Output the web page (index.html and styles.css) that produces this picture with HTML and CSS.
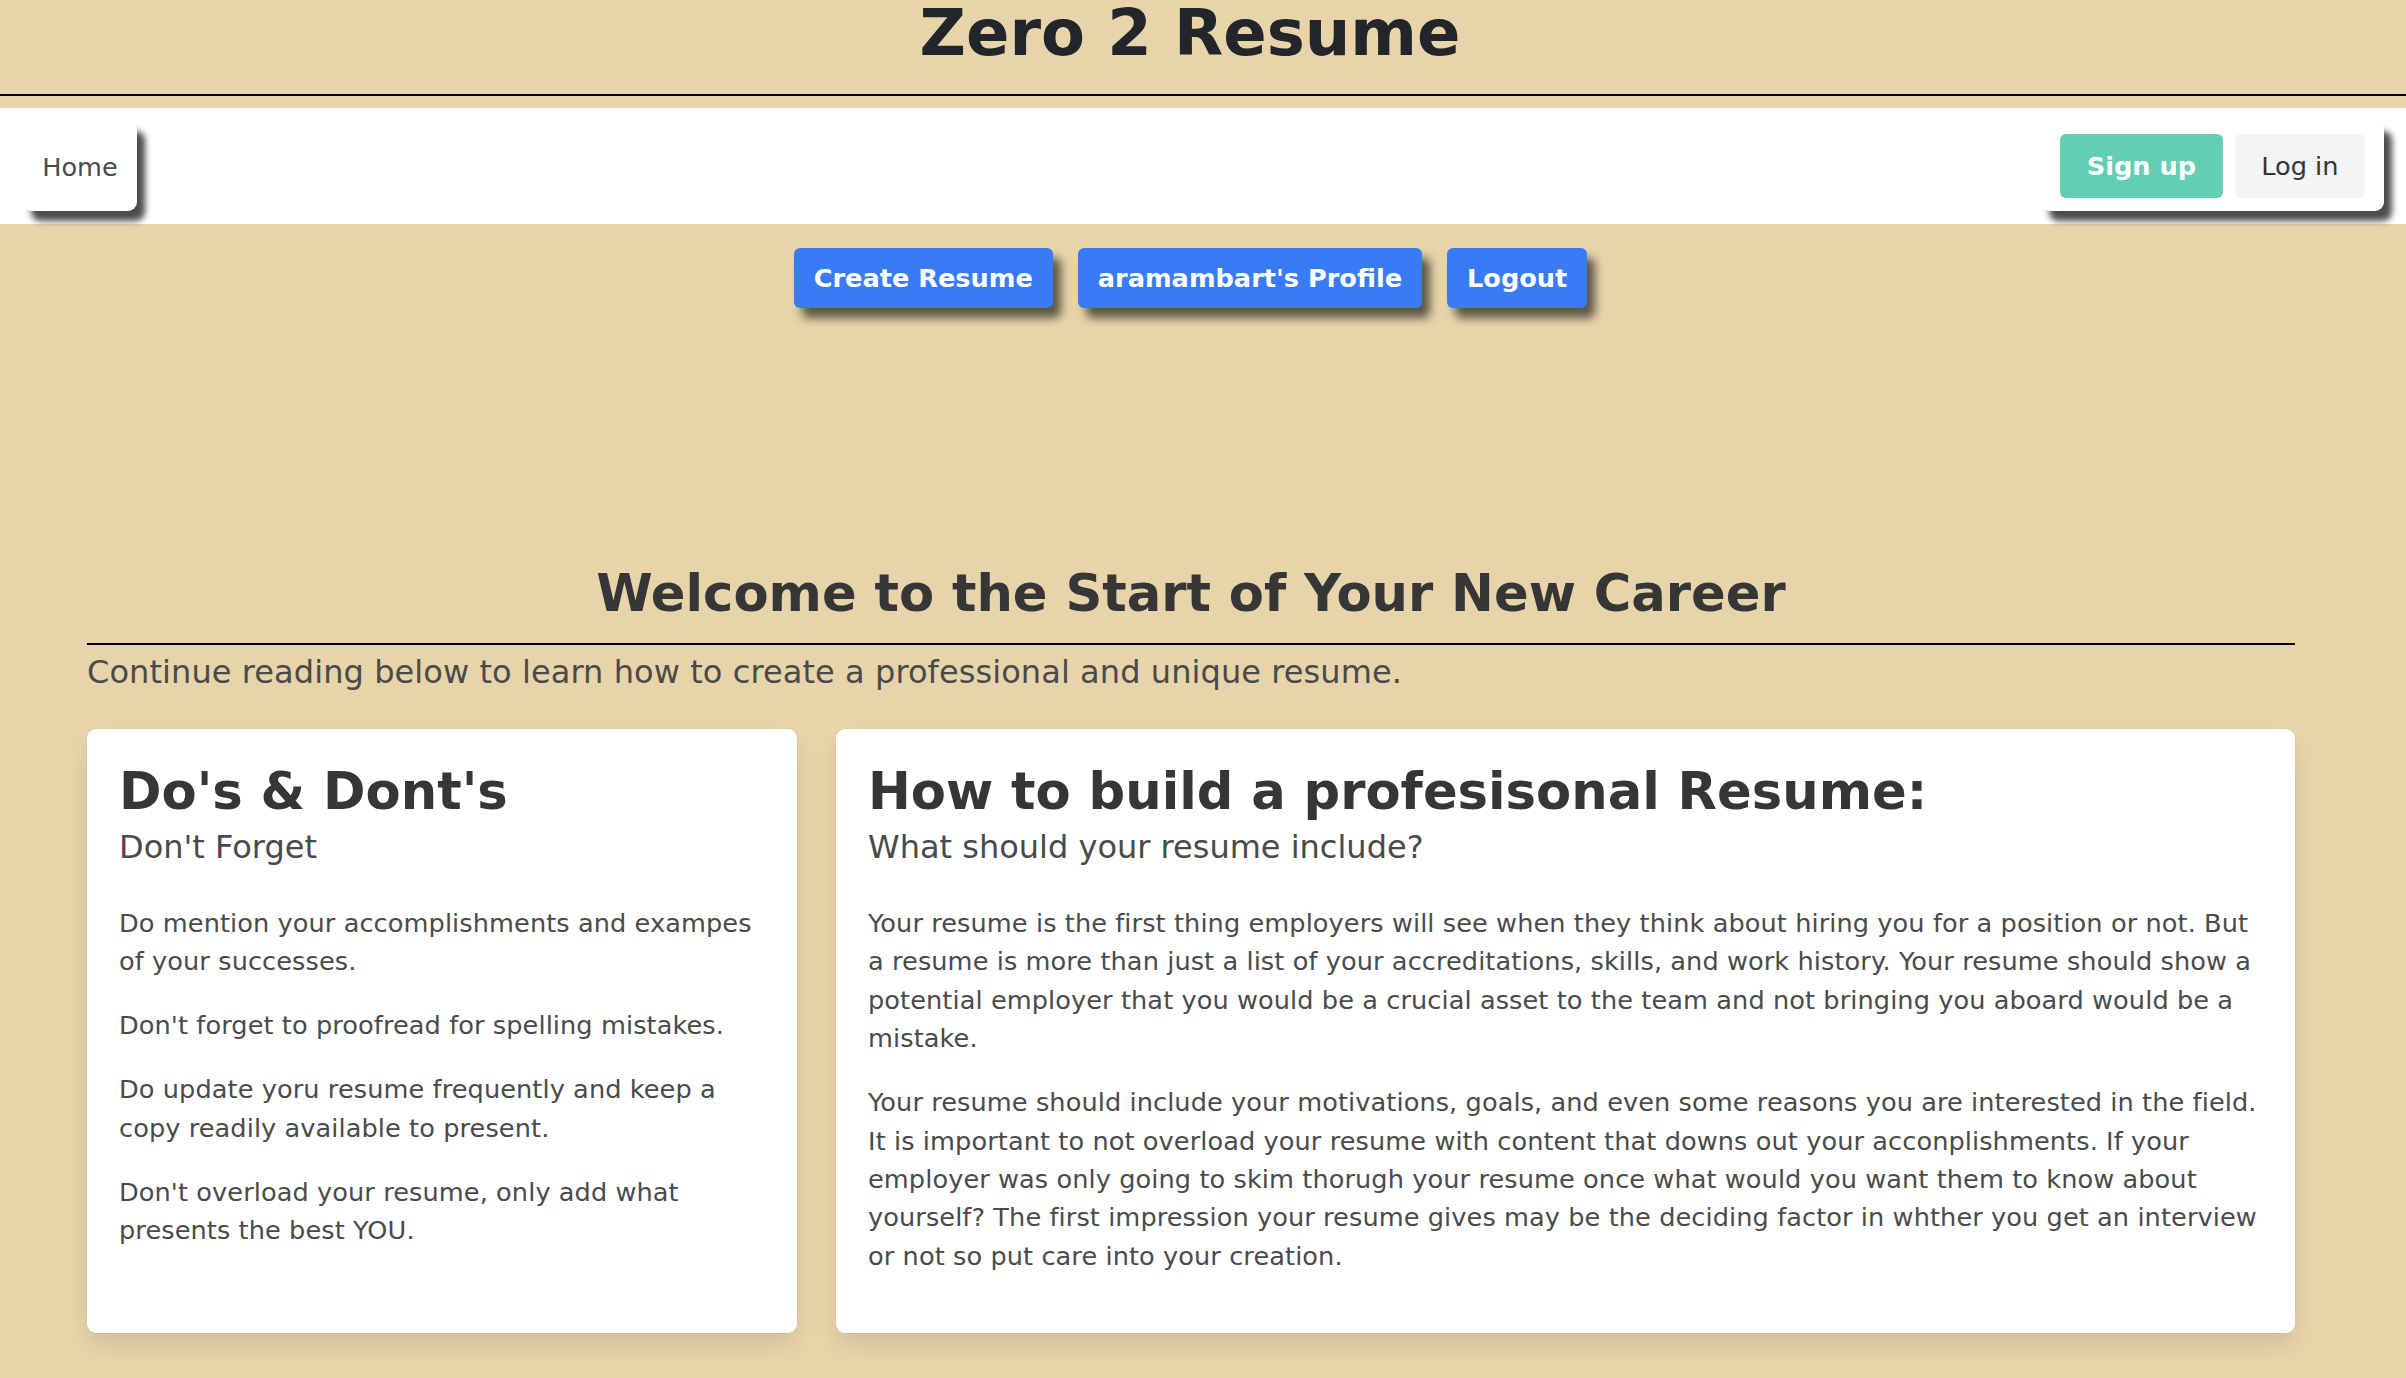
FILE: index.html
```html
<!DOCTYPE html>
<html lang="en">
<head>
<meta charset="utf-8">
<title>Zero 2 Resume</title>
<link rel="stylesheet" href="styles.css">
</head>
<body>
<header class="site-header">
  <h1 class="site-title">Zero 2 Resume</h1>
</header>
<nav class="navbar">
  <div class="nav-start">
    <a class="nav-home" href="#">Home</a>
  </div>
  <div class="nav-end">
    <div class="nav-auth">
      <a class="btn btn-signup" href="#">Sign up</a>
      <a class="btn btn-login" href="#">Log in</a>
    </div>
  </div>
</nav>
<div class="actions">
  <a class="action-btn" href="#">Create Resume</a>
  <a class="action-btn" href="#">aramambart's Profile</a>
  <a class="action-btn" href="#">Logout</a>
</div>
<main class="main">
  <h2 class="welcome-title">Welcome to the Start of Your New Career</h2>
  <hr class="rule">
  <p class="lead">Continue reading below to learn how to create a professional and unique resume.</p>
  <div class="cards">
    <section class="card">
      <h3 class="card-title">Do's &amp; Dont's</h3>
      <p class="card-subtitle">Don't Forget</p>
      <div class="card-body">
        <p>Do mention your accomplishments and exampes of your successes.</p>
        <p>Don't forget to proofread for spelling mistakes.</p>
        <p>Do update yoru resume frequently and keep a copy readily available to present.</p>
        <p>Don't overload your resume, only add what presents the best YOU.</p>
      </div>
    </section>
    <section class="card">
      <h3 class="card-title">How to build a profesisonal Resume:</h3>
      <p class="card-subtitle">What should your resume include?</p>
      <div class="card-body">
        <p>Your resume is the first thing employers will see when they think about hiring you for a position or not. But a resume is more than just a list of your accreditations, skills, and work history. Your resume should show a potential employer that you would be a crucial asset to the team and not bringing you aboard would be a mistake.</p>
        <p>Your resume should include your motivations, goals, and even some reasons you are interested in the field. It is important to not overload your resume with content that downs out your acconplishments. If your employer was only going to skim thorugh your resume once what would you want them to know about yourself? The first impression your resume gives may be the deciding factor in whther you get an interview or not so put care into your creation.</p>
      </div>
    </section>
  </div>
</main>
</body>
</html>
```
FILE: styles.css
```css
html, body {
  margin: 0;
  padding: 0;
}
body {
  background: #e8d4aa;
  font-family: "DejaVu Sans", "Liberation Sans", sans-serif;
  color: #4a4a4a;
  min-height: 1378px;
}
a {
  text-decoration: none;
}

.site-header {
  padding: 1px 26px 0 0;
  border-bottom: 2px solid #000;
}
.site-title {
  margin: 0 0 29px;
  font-size: 64px;
  line-height: 64px;
  font-weight: 700;
  text-align: center;
  color: #22262a;
}

.navbar {
  margin-top: 12px;
  height: 116px;
  background: #fff;
  display: flex;
  align-items: center;
  justify-content: space-between;
  padding: 0 22px 0 23px;
}
.nav-home {
  display: flex;
  align-items: center;
  justify-content: center;
  width: 114px;
  height: 90px;
  padding-top: 2px;
  box-sizing: border-box;
  background: #fff;
  border-radius: 9px;
  box-shadow: 8px 10px 6px rgba(0, 0, 0, 0.7);
  font-size: 25.6px;
  color: #4a4a4a;
}
.nav-auth {
  display: flex;
  gap: 12px;
  padding: 13px 19px;
  background: #fff;
  border-radius: 9px;
  box-shadow: 8px 10px 6px rgba(0, 0, 0, 0.7);
}
.btn {
  display: flex;
  align-items: center;
  height: 64px;
  padding: 0 26.6px;
  border-radius: 6px;
  font-size: 25.6px;
}
.btn-signup {
  background: #62cfb2;
  color: #fff;
  font-weight: 700;
}
.btn-login {
  background: #f4f4f4;
  color: #363636;
}

.actions {
  display: flex;
  justify-content: center;
  gap: 25px;
  margin-top: 24px;
  padding-right: 25px;
}
.action-btn {
  display: flex;
  align-items: center;
  height: 60px;
  padding: 0 20px;
  background: #387bf5;
  color: #fff;
  font-size: 25.6px;
  font-weight: 700;
  border-radius: 6px;
  box-shadow: 8px 10px 10px rgba(0, 0, 0, 0.6);
}

.main {
  margin-top: 257px;
  padding: 0 111px 0 87px;
}
.welcome-title {
  margin: 0;
  font-size: 51.2px;
  line-height: 57.6px;
  font-weight: 700;
  text-align: center;
  color: #363636;
}
.rule {
  border: 0;
  border-top: 2px solid #000;
  margin: 20px 0 0;
  height: 0;
}
.lead {
  margin: 7px 0 0;
  font-size: 32px;
  line-height: 40px;
  letter-spacing: 0.08px;
  color: #4a4a4a;
}

.cards {
  margin-top: 37px;
  display: grid;
  grid-template-columns: 710px 1fr;
  gap: 39px;
}
.card {
  background: #fff;
  border-radius: 9px;
  box-shadow: 0 12px 24px -3px rgba(10, 10, 10, 0.12), 0 0 0 1px rgba(10, 10, 10, 0.02);
  padding: 34px 32px 32px;
}
.card-title {
  margin: 0 0 6.4px;
  font-size: 51.2px;
  line-height: 57.6px;
  font-weight: 700;
  color: #363636;
}
.card-subtitle {
  margin: 0 0 37.4px;
  font-size: 32px;
  line-height: 40px;
  color: #4a4a4a;
}
.card-body p {
  margin: 0 0 25.6px;
  font-size: 25.6px;
  line-height: 38.4px;
  letter-spacing: 0.09px;
  color: #4a4a4a;
}
```
